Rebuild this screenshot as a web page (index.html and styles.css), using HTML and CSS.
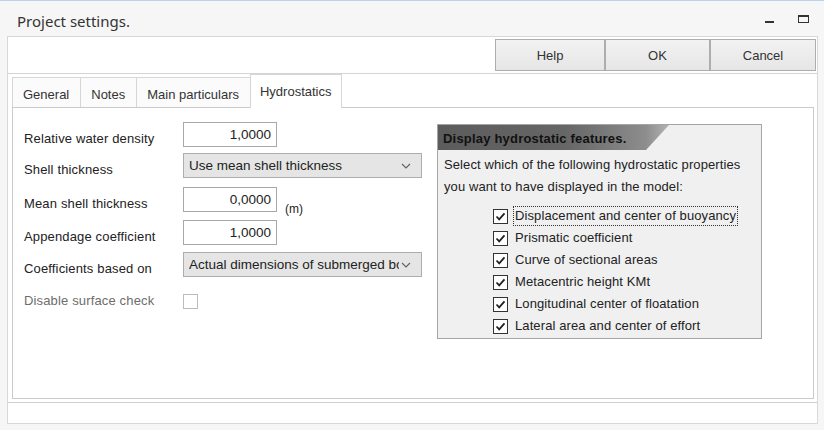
FILE: index.html
```html
<!DOCTYPE html>
<html>
<head>
<meta charset="utf-8">
<title>Project settings.</title>
<link rel="stylesheet" href="styles.css">
</head>
<body>
<div class="titlebar">
  <span class="title">Project settings.</span>
  <div class="winctl">
    <span class="min"></span>
    <span class="max"></span>
  </div>
</div>
<div class="frame">
  <div class="toolbar">
    <button class="btn btn-help">Help</button>
    <button class="btn btn-ok">OK</button>
    <button class="btn btn-cancel">Cancel</button>
  </div>
  <div class="tabarea">
    <div class="tabs">
      <div class="tab">General</div>
      <div class="tab">Notes</div>
      <div class="tab">Main particulars</div>
      <div class="tab active">Hydrostatics</div>
    </div>
    <div class="page">
      <div class="form">
        <div class="row r1">
          <span class="label">Relative water density</span>
          <div class="field"><span class="input">1,0000</span></div>
        </div>
        <div class="row r2">
          <span class="label">Shell thickness</span>
          <div class="field"><span class="combo"><span class="combo-text">Use mean shell thickness</span><svg class="chev" width="10" height="6" viewBox="0 0 10 6"><path d="M1 1 L5 5 L9 1" fill="none" stroke="#606060" stroke-width="1.1"/></svg></span></div>
        </div>
        <div class="row r3">
          <span class="label">Mean shell thickness</span>
          <div class="field"><span class="input">0,0000</span><span class="unit">(m)</span></div>
        </div>
        <div class="row r4">
          <span class="label">Appendage coefficient</span>
          <div class="field"><span class="input">1,0000</span></div>
        </div>
        <div class="row r5">
          <span class="label">Coefficients based on</span>
          <div class="field"><span class="combo"><span class="combo-text">Actual dimensions of submerged bc</span><svg class="chev" width="10" height="6" viewBox="0 0 10 6"><path d="M1 1 L5 5 L9 1" fill="none" stroke="#606060" stroke-width="1.1"/></svg></span></div>
        </div>
        <div class="row r6">
          <span class="label disabled">Disable surface check</span>
          <div class="field"><span class="cb-disabled"></span></div>
        </div>
      </div>
      <div class="group">
        <div class="banner">Display hydrostatic features.</div>
        <p class="desc">Select which of the following hydrostatic properties<br>you want to have displayed in the model:</p>
        <ul class="checks">
          <li><span class="cb"><svg width="13" height="13" viewBox="0 0 13 13"><path d="M2.5 6.5 L5.2 9.3 L10.5 3.3" fill="none" stroke="#222" stroke-width="1.8"/></svg></span><span class="cl focus">Displacement and center of buoyancy</span></li>
          <li><span class="cb"><svg width="13" height="13" viewBox="0 0 13 13"><path d="M2.5 6.5 L5.2 9.3 L10.5 3.3" fill="none" stroke="#222" stroke-width="1.8"/></svg></span><span class="cl">Prismatic coefficient</span></li>
          <li><span class="cb"><svg width="13" height="13" viewBox="0 0 13 13"><path d="M2.5 6.5 L5.2 9.3 L10.5 3.3" fill="none" stroke="#222" stroke-width="1.8"/></svg></span><span class="cl">Curve of sectional areas</span></li>
          <li><span class="cb"><svg width="13" height="13" viewBox="0 0 13 13"><path d="M2.5 6.5 L5.2 9.3 L10.5 3.3" fill="none" stroke="#222" stroke-width="1.8"/></svg></span><span class="cl">Metacentric height KMt</span></li>
          <li><span class="cb"><svg width="13" height="13" viewBox="0 0 13 13"><path d="M2.5 6.5 L5.2 9.3 L10.5 3.3" fill="none" stroke="#222" stroke-width="1.8"/></svg></span><span class="cl">Longitudinal center of floatation</span></li>
          <li><span class="cb"><svg width="13" height="13" viewBox="0 0 13 13"><path d="M2.5 6.5 L5.2 9.3 L10.5 3.3" fill="none" stroke="#222" stroke-width="1.8"/></svg></span><span class="cl">Lateral area and center of effort</span></li>
        </ul>
      </div>
    </div>
  </div>
  <div class="status"></div>
</div>
</body>
</html>
```

FILE: styles.css
```css
* { box-sizing: border-box; }
html, body { margin: 0; padding: 0; }
body {
  width: 824px;
  height: 430px;
  overflow: hidden;
  background: #f6f6f6;
  border-top: 1px solid #bcd3e8;
  font-family: "Liberation Sans", Arial, sans-serif;
  font-size: 13px;
  color: #222;
}

/* title bar */
.titlebar {
  height: 35px;
  display: flex;
  align-items: center;
  padding-left: 17px;
}
.title {
  flex: 1;
  font-family: "Noto Sans", "Open Sans", sans-serif;
  font-size: 15px;
  color: #333;
  padding-top: 4px;
}
.winctl {
  display: flex;
  align-items: center;
  gap: 24px;
  margin-right: 15px;
  height: 35px;
}
.min {
  width: 9px;
  height: 2px;
  background: #333;
  margin-top: 7px;
}
.max {
  width: 11px;
  height: 8px;
  border: 1px solid #333;
  border-top-width: 2px;
  margin-top: 1px;
}

/* frame */
.frame {
  margin: 0 7px;
  width: 811px;
  height: 388px;
  border: 1px solid #d8d8d8;
  background: #fff;
  display: flex;
  flex-direction: column;
}
.toolbar {
  height: 37px;
  border-bottom: 1px solid #d4d4d4;
  display: flex;
  justify-content: flex-end;
  align-items: flex-start;
  padding: 2px 1px 0 0;
}
.btn {
  height: 32px;
  margin: 0;
  border: 1px solid #adadad;
  background: linear-gradient(#f2f2f2, #e6e6e6);
  font-family: "Liberation Sans", Arial, sans-serif;
  font-size: 13px;
  color: #333;
  padding: 0;
}
.btn-help { width: 110px; }
.btn-ok { width: 105px; }
.btn-cancel { width: 106px; }

/* tabs */
.tabarea {
  height: 329px;
  border-bottom: 1px solid #cfcfcf;
  padding: 0 3px 3px 4px;
  display: flex;
  flex-direction: column;
}
.tabs {
  height: 33px;
  display: flex;
  align-items: flex-end;
}
.tab {
  height: 30px;
  padding: 9px 11px 0 10px;
  border: 1px solid #d6d6d6;
  border-bottom: none;
  background: #fbfbfb;
  color: #333;
  white-space: nowrap;
  margin-left: -1px;
}
.tab:first-child { margin-left: 0; }
.tab.active {
  height: 34px;
  margin-bottom: -1px;
  padding: 9px 9px 0 9px;
  background: #fff;
  position: relative;
  z-index: 1;
}
.page {
  height: 292px;
  border: 1px solid #cacaca;
  background: #fff;
  padding: 14px 0 0 11px;
  display: flex;
  align-items: flex-start;
  gap: 15px;
}

/* left form */
.form {
  width: 398px;
  display: flex;
  flex-direction: column;
}
.row {
  display: grid;
  grid-template-columns: 159px 239px;
  align-items: end;
}
.r2 { margin-top: 6px; }
.r3 { margin-top: 9px; }
.r4 { margin-top: 8px; }
.r5 { margin-top: 7px; }
.r6 { margin-top: 16px; }
.label {
  line-height: 16px;
  white-space: nowrap;
  letter-spacing: 0.15px;
}
.label.disabled { color: #6d6d6d; }
.field {
  display: flex;
  align-items: flex-end;
}
.input {
  width: 94px;
  height: 25px;
  border: 1px solid #a8a8a8;
  background: #fff;
  text-align: right;
  padding: 4px 5px 0 0;
  font-size: 13.5px;
}
.unit {
  margin-left: 8px;
  margin-bottom: -4px;
  font-size: 12px;
  line-height: 14px;
}
.combo {
  width: 239px;
  height: 25px;
  border: 1px solid #adadad;
  background: #e5e5e5;
  display: flex;
  align-items: center;
  padding: 0 0 0 5px;
  font-size: 13.5px;
}
.combo-text {
  width: 210px;
  overflow: hidden;
  white-space: nowrap;
}
.chev { margin-left: 2px; }
.cb-disabled {
  width: 15px;
  height: 15px;
  border: 1px solid #bcbcbc;
  background: #fff;
}

/* group box */
.group {
  width: 325px;
  height: 215px;
  margin-top: 2px;
  border: 1px solid #a5a5a5;
  background: #f0f0f0;
}
.banner {
  width: 231px;
  height: 25px;
  padding: 6px 0 0 5px;
  font-weight: bold;
  font-size: 13px;
  color: #111;
  background: linear-gradient(to right, #5c5c5c 0%, #666 55%, #8d8d8d 90%, #b4b4b4 100%);
  clip-path: polygon(0 0, 100% 0, 208px 100%, 0 100%);
  letter-spacing: 0.2px;
}
.desc {
  margin: 0;
  padding: 4px 0 0 6px;
  line-height: 22px;
  font-size: 13px;
  letter-spacing: 0.1px;
}
.checks {
  list-style: none;
  margin: 7px 0 0 0;
  padding: 0 0 0 55px;
}
.checks li {
  height: 22px;
  display: flex;
  align-items: center;
}
.cb {
  width: 15px;
  height: 15px;
  border: 1px solid #333;
  background: #fff;
  display: flex;
  align-items: center;
  justify-content: center;
  margin-right: 5px;
}
.cl {
  padding: 1px 1px 2px 1px;
  font-size: 13px;
  letter-spacing: 0.1px;
  line-height: 15px;
  border: 1px solid transparent;
  white-space: nowrap;
}
.cl.focus { border: 1px dotted #333; }

.status {
  height: 20px;
  background: #fff;
}
```
